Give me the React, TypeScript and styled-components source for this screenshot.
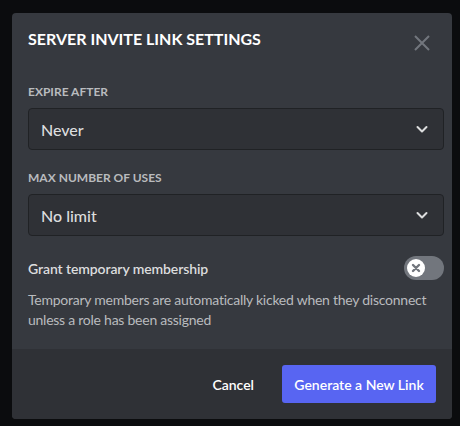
import styled, { createGlobalStyle } from 'styled-components';

const GlobalStyle = createGlobalStyle`
	html, body {
		margin: 0;
		padding: 0;
		background: #0b0c0e;
		font-family: Lato, "Noto Sans", sans-serif;
	}
	* {
		box-sizing: border-box;
	}
`;

function Chevron() {
	return (
		<svg width="20" height="20" viewBox="0 0 20 20">
			<path
				d="M5.5 8l4.5 4.5 4.5-4.5"
				fill="none"
				stroke="#dcddde"
				strokeWidth="2"
				strokeLinecap="round"
				strokeLinejoin="round"
			/>
		</svg>
	);
}

function App() {
	return (
		<>
			<GlobalStyle />
			<Page>
				<Modal>
					<Header>
						<Title>Server Invite Link Settings</Title>
						<CloseBtn aria-label="Close">
							<svg width="16" height="16" viewBox="0 0 16 16">
								<path d="M1 1L15 15M15 1L1 15" stroke="#72767d" strokeWidth="2" />
							</svg>
						</CloseBtn>
					</Header>
					<Body>
						<Field>
							<Label>Expire After</Label>
							<Select>
								<span>Never</span>
								<Chevron />
							</Select>
						</Field>
						<Field>
							<Label>Max Number of Uses</Label>
							<Select>
								<span>No limit</span>
								<Chevron />
							</Select>
						</Field>
						<ToggleRow>
							<ToggleLabel>Grant temporary membership</ToggleLabel>
							<Switch>
								<Knob>
									<svg width="10" height="10" viewBox="0 0 10 10">
										<path d="M2 2L8 8M8 2L2 8" stroke="#72767d" strokeWidth="2.4" strokeLinecap="round" />
									</svg>
								</Knob>
							</Switch>
						</ToggleRow>
						<Note>
							Temporary members are automatically kicked when they disconnect
							unless a role has been assigned
						</Note>
					</Body>
					<Footer>
						<TextBtn>Cancel</TextBtn>
						<PrimaryBtn>Generate a New Link</PrimaryBtn>
					</Footer>
				</Modal>
			</Page>
		</>
	);
}

const Page = styled.div`
	padding: 13px 8px 7px 12px;
	height: 426px;
`;

const Modal = styled.div`
	width: 440px;
	background: #36393f;
	border-radius: 4px;
	overflow: hidden;
	display: flex;
	flex-direction: column;
`;

const Header = styled.header`
	display: flex;
	justify-content: space-between;
	align-items: flex-start;
	padding: 16px 22px 0 16px;
	height: 71px;
`;

const Title = styled.h2`
	margin: 0;
	color: #fff;
	font-size: 16px;
	line-height: 20px;
	font-weight: 700;
	text-transform: uppercase;
`;

const CloseBtn = styled.button`
	margin-top: 6px;
	padding: 0;
	border: none;
	background: none;
	display: flex;
`;

const Body = styled.div`
	padding: 0 8px 10px 16px;
	display: flex;
	flex-direction: column;
`;

const Field = styled.div`
	margin-bottom: 20px;
`;

const Label = styled.div`
	color: #b9bbbe;
	font-size: 12px;
	line-height: 16px;
	font-weight: 700;
	text-transform: uppercase;
	margin-bottom: 8px;
`;

const Select = styled.div`
	height: 42px;
	width: 416px;
	display: flex;
	align-items: center;
	justify-content: space-between;
	padding: 0 11px 0 12px;
	background: #2f3136;
	border: 1px solid #202225;
	border-radius: 4px;
	color: #dcddde;
	font-size: 16px;
	font-weight: 500;
`;

const ToggleRow = styled.div`
	display: flex;
	align-items: center;
	justify-content: space-between;
	width: 416px;
`;

const ToggleLabel = styled.div`
	color: #dcddde;
	font-size: 14px;
	font-weight: 600;
	letter-spacing: -0.1px;
`;

const Switch = styled.div`
	width: 40px;
	height: 24px;
	border-radius: 12px;
	background: #72767d;
	padding: 3px;
	display: flex;
	align-items: center;
`;

const Knob = styled.div`
	width: 18px;
	height: 18px;
	border-radius: 50%;
	background: #fff;
	display: flex;
	align-items: center;
	justify-content: center;
`;

const Note = styled.p`
	margin: 10px 0 0;
	color: #b9bbbe;
	font-size: 14px;
	line-height: 20px;
	letter-spacing: -0.25px;
	width: 416px;
	height: 49px;
`;

const Footer = styled.footer`
	background: #2f3136;
	height: 70px;
	display: flex;
	align-items: center;
	justify-content: flex-end;
	padding: 0 16px;
	gap: 12px;
`;

const TextBtn = styled.button`
	border: none;
	background: none;
	color: #fff;
	font-family: inherit;
	font-size: 14px;
	font-weight: 600;
	padding: 0 16px;
	height: 38px;
`;

const PrimaryBtn = styled.button`
	border: none;
	border-radius: 3px;
	background: #5865f2;
	color: #fff;
	font-family: inherit;
	font-size: 14px;
	font-weight: 600;
	height: 38px;
	width: 154px;
`;

export default App;
